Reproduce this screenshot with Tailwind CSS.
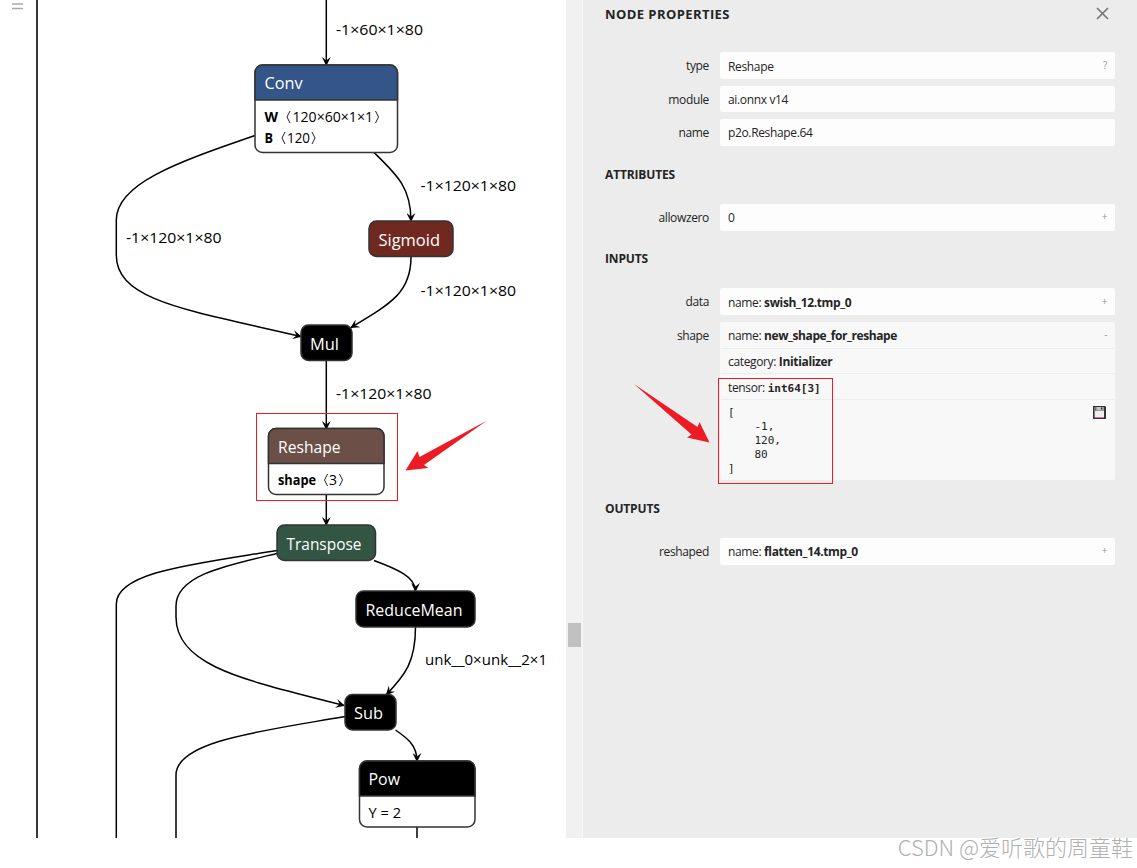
<!DOCTYPE html>
<html lang="en">

<head>
    <meta charset="UTF-8">
    <meta name="viewport" content="width=device-width, initial-scale=1.0">
    <title>Node Properties</title>
    <script src="https://cdn.jsdelivr.net/npm/@tailwindcss/browser@4"></script>
</head>

<body class="relative h-[868px] w-[1137px] overflow-hidden bg-white font-['Open_Sans','Noto_Sans',sans-serif]">
    <div class="flex h-[838px]">
        <!-- Graph -->
        <main class="w-[566px] shrink-0">
            <svg width="566" height="838" viewBox="0 0 566 838" class="block font-['Open_Sans','Noto_Sans',sans-serif]">
                <defs>
                    <marker id="arrow" viewBox="0 0 10 10" refX="9" refY="5" markerUnits="userSpaceOnUse" markerWidth="9" markerHeight="9" orient="auto">
                        <path d="M0 0 L10 5 L0 10 L4 5 Z" />
                    </marker>
                </defs>

                <!-- Menu button -->
                <path d="M12 4h11M12 8.5h11" stroke="#a8a8a8" stroke-width="1.4" />

                <!-- Edges -->
                <g fill="none" stroke="#000" stroke-width="1.5">
                    <path d="M37 0V838" stroke="#222" stroke-width="1.8" />
                    <path d="M326.300 0V65" marker-end="url(#arrow)" />
                    <path d="M255 135.500C175 163 116.300 184 116.300 220V255C116.300 301 188 310 301 336.500" marker-end="url(#arrow)" />
                    <path d="M374 152.500C396 174 411 187 411 221" marker-end="url(#arrow)" />
                    <path d="M411 257C411 292 392 303 351 327.500" marker-end="url(#arrow)" />
                    <path d="M326.300 361V429" marker-end="url(#arrow)" />
                    <path d="M326.300 495V525" marker-end="url(#arrow)" />
                    <path d="M277 550.500C194 564 116.300 572 116.300 604V838" />
                    <path d="M277 553.500C228 565 176 575 176 606V617C176 668 251 681 344 705.500" marker-end="url(#arrow)" />
                    <path d="M374 560.500C397 569 415.500 577 415.500 591" marker-end="url(#arrow)" />
                    <path d="M415.500 627C415.500 662 405 675 386.500 694.500" marker-end="url(#arrow)" />
                    <path d="M345 716.500C262 731 176 741 176 775V838" />
                    <path d="M395.500 730C407 738 417 745 417 761" marker-end="url(#arrow)" />
                    <path d="M417 827V838" />
                </g>

                <!-- Edge labels -->
                <g font-size="15" fill="#000">
                    <text x="336" y="35" textLength="87" lengthAdjust="spacingAndGlyphs">-1×60×1×80</text>
                    <text x="420.500" y="191" textLength="95.500" lengthAdjust="spacingAndGlyphs">-1×120×1×80</text>
                    <text x="126" y="243" textLength="95.500" lengthAdjust="spacingAndGlyphs">-1×120×1×80</text>
                    <text x="420.500" y="296" textLength="95.500" lengthAdjust="spacingAndGlyphs">-1×120×1×80</text>
                    <text x="336" y="399" textLength="95.500" lengthAdjust="spacingAndGlyphs">-1×120×1×80</text>
                    <text x="425" y="665" textLength="122" lengthAdjust="spacingAndGlyphs">unk__0×unk__2×1</text>
                </g>

                <!-- Nodes -->
                <g stroke="#333" stroke-width="1.500">
                    <rect x="255" y="65" width="142.500" height="87.500" rx="7.500" fill="#fff" />
                    <path d="M255 100V72.500a7.500 7.500 0 0 1 7.500-7.500H390a7.500 7.500 0 0 1 7.500 7.500V100Z" fill="#335588" />
                    <rect x="369" y="221" width="84" height="35.500" rx="7.500" fill="#702921" />
                    <rect x="301" y="325" width="51" height="35.500" rx="7.500" fill="#000" />
                    <rect x="268.500" y="428.500" width="115.500" height="66" rx="7.500" fill="#fff" />
                    <path d="M268.500 463.500V436a7.500 7.500 0 0 1 7.500-7.500H376.500a7.500 7.500 0 0 1 7.500 7.500V463.500Z" fill="#6c4f47" />
                    <rect x="277" y="525" width="98.500" height="35.500" rx="7.500" fill="#335544" />
                    <rect x="356" y="591" width="119" height="36" rx="7.500" fill="#000" />
                    <rect x="345" y="694.500" width="51" height="35.500" rx="7.500" fill="#000" />
                    <rect x="359.500" y="761" width="115.500" height="66" rx="7.500" fill="#fff" />
                    <path d="M359.500 796V768.500a7.500 7.500 0 0 1 7.500-7.500H467.500a7.500 7.500 0 0 1 7.500 7.500V796Z" fill="#000" />
                </g>
                <g font-size="16.500" fill="#fff">
                    <text x="264.500" y="89" textLength="38" lengthAdjust="spacingAndGlyphs">Conv</text>
                    <text x="378.500" y="246" textLength="61.500" lengthAdjust="spacingAndGlyphs">Sigmoid</text>
                    <text x="310" y="350" textLength="29" lengthAdjust="spacingAndGlyphs">Mul</text>
                    <text x="278" y="453" textLength="62.500" lengthAdjust="spacingAndGlyphs">Reshape</text>
                    <text x="286.500" y="550" textLength="75" lengthAdjust="spacingAndGlyphs">Transpose</text>
                    <text x="365.500" y="616" textLength="97" lengthAdjust="spacingAndGlyphs">ReduceMean</text>
                    <text x="354" y="719" textLength="29" lengthAdjust="spacingAndGlyphs">Sub</text>
                    <text x="368.500" y="785" textLength="31.500" lengthAdjust="spacingAndGlyphs">Pow</text>
                </g>
                <g font-size="14" fill="#000">
                    <text x="264.500" y="122" font-weight="700" textLength="13.500" lengthAdjust="spacingAndGlyphs">W</text>
                    <text x="292.500" y="122" textLength="80.500" lengthAdjust="spacingAndGlyphs">120×60×1×1</text>
                    <text x="264.500" y="143" font-weight="700" textLength="8.500" lengthAdjust="spacingAndGlyphs">B</text>
                    <text x="287" y="143" textLength="23" lengthAdjust="spacingAndGlyphs">120</text>
                    <text x="278" y="485" font-size="13.500" font-weight="700" textLength="38" lengthAdjust="spacingAndGlyphs">shape</text>
                    <text x="329" y="485" textLength="8" lengthAdjust="spacingAndGlyphs">3</text>
                    <text x="368.500" y="818" textLength="32.500" lengthAdjust="spacingAndGlyphs">Y = 2</text>
                </g>
                <!-- Angle brackets round the tensor shapes -->
                <path d="M290 111l-3 6 3 6M375.500 111l3 6-3 6M285 132l-3 6 3 6M312 132l3 6-3 6M327.500 474l-3 6 3 6M339.500 474l3 6-3 6" fill="none" stroke="#222" stroke-width="1" />

                <!-- Highlight -->
                <rect x="256.500" y="413.500" width="141" height="87" fill="none" stroke="#ed1c24" />
                <path d="M487 420.500L424 465 428.500 468 405.500 470.500 417.500 451 419.500 457Z" fill="#ed1c24" />
            </svg>
        </main>

        <!-- Scrollbar -->
        <div class="w-[17px] shrink-0 border-r border-[#f7f7f7] bg-[#f1f1f1] pt-[623px] pl-0.5">
            <div class="h-6 w-[13px] bg-[#c1c1c1]"></div>
        </div>

        <!-- Sidebar -->
        <aside class="relative flex-1 bg-[#ececec] pr-[22px] pl-[21px] text-xs tracking-[-0.35px] text-[#242424]">
            <header class="flex h-[52px] items-start justify-between pr-[6px]">
                <h1 class="pt-1 pl-px text-[13px] leading-5 font-bold tracking-[0.42px]">NODE PROPERTIES</h1>
                <svg width="13" height="13" viewBox="0 0 13 13" class="mt-[7px]" stroke="#777" stroke-width="1.7">
                    <path d="M1 1l11 11M12 1L1 12" />
                </svg>
            </header>

            <section class="h-[112px]">
                <div class="mb-[7px] flex h-[27px] gap-[11px]">
                    <div class="w-[105px] text-right leading-[28px]">type</div>
                    <div class="flex h-[27px] flex-1 justify-between rounded-xs bg-[#fdfdfd] px-2 leading-[29px]">
                        <span>Reshape</span><span class="text-[10px] leading-[26px] text-[#999]">?</span>
                    </div>
                </div>
                <div class="mb-[7px] flex h-[26px] gap-[11px]">
                    <div class="w-[105px] text-right leading-[27px]">module</div>
                    <div class="h-[26px] flex-1 rounded-xs bg-[#fdfdfd] px-2 leading-[28px]">ai.onnx v14</div>
                </div>
                <div class="flex gap-[11px]">
                    <div class="w-[105px] text-right leading-[27px]">name</div>
                    <div class="h-[27px] flex-1 rounded-xs bg-[#fdfdfd] px-2 leading-[28px]">p2o.Reshape.64</div>
                </div>
            </section>

            <h2 class="h-10 pl-px leading-[21px] font-bold tracking-[-0.15px]">ATTRIBUTES</h2>
            <section class="h-11">
                <div class="flex gap-[11px]">
                    <div class="w-[105px] text-right leading-[27px]">allowzero</div>
                    <div class="flex h-[27px] flex-1 justify-between rounded-xs bg-[#fdfdfd] px-2 leading-[28px]">
                        <span>0</span><span class="text-[10px] leading-[24px] text-[#999]">+</span>
                    </div>
                </div>
            </section>

            <h2 class="h-10 pl-px leading-[21px] font-bold tracking-[-0.15px]">INPUTS</h2>
            <section class="h-[210px]">
                <div class="mb-[7px] flex h-[27px] gap-[11px]">
                    <div class="w-[105px] text-right leading-[28px]">data</div>
                    <div class="flex h-[27px] flex-1 justify-between rounded-xs bg-[#fdfdfd] px-2 leading-[30px]">
                        <span>name: <b class="font-bold">swish_12.tmp_0</b></span><span class="text-[10px] leading-[26px] text-[#999]">+</span>
                    </div>
                </div>
                <div class="flex gap-[11px]">
                    <div class="w-[105px] text-right leading-[27px]">shape</div>
                    <div class="h-[158px] flex-1 rounded-xs bg-[#f8f8f8] px-px">
                        <div class="flex h-[27px] justify-between border-b border-[#ececec] px-[7px] leading-[28px]">
                            <span>name: <b class="font-bold tracking-[-0.42px]">new_shape_for_reshape</b></span><span class="text-[10px] leading-[24px] text-[#999]">-</span>
                        </div>
                        <div class="h-[25px] border-b border-[#ececec] px-[7px] leading-[26px]">category: <b class="font-bold">Initializer</b></div>
                        <div class="h-[26px] border-b border-[#ececec] px-[7px] leading-[27px]">tensor: <b class="font-['DejaVu_Sans_Mono',monospace] text-[11px] font-bold tracking-normal">int64[3]</b></div>
                        <div class="flex justify-between pt-[6px] pr-2 pl-[7px]">
                            <pre class="font-['DejaVu_Sans_Mono',monospace] text-[11px] leading-[14px] tracking-normal">[
    -1,
    120,
    80
]</pre>
                            <!-- Save tensor -->
                            <svg width="13" height="13" viewBox="0 0 13 13">
                                <path d="M0 0h12l1 1v12H0Z" fill="#333" />
                                <path d="M1 1h2v11H1ZM3 4h7l1 1v7H3Z" fill="#777" />
                                <path d="M3 1h8v4H3Z" fill="#999" />
                                <path d="M4 1h5v3H4Z" fill="#c4c4c4" />
                                <path d="M8 1.500h1v2H8Z" fill="#222" />
                                <path d="M2 5h9v6H2Z" fill="#f0edf0" />
                                <path d="M2 11h9v1H2Z" fill="#d070a0" />
                            </svg>
                        </div>
                    </div>
                </div>
            </section>

            <h2 class="h-10 pl-px leading-[21px] font-bold tracking-[-0.15px]">OUTPUTS</h2>
            <section>
                <div class="flex gap-[11px]">
                    <div class="w-[105px] text-right leading-[27px]">reshaped</div>
                    <div class="flex h-[27px] flex-1 justify-between rounded-xs bg-[#fdfdfd] px-2 leading-[28px]">
                        <span>name: <b class="font-bold">flatten_14.tmp_0</b></span><span class="text-[10px] leading-[24px] text-[#999]">+</span>
                    </div>
                </div>
            </section>

            <!-- Highlight over the tensor value -->
            <svg width="210" height="120" viewBox="630 370 210 120" class="absolute top-[370px] left-[47px]">
                <rect x="718.500" y="378.500" width="114" height="105" fill="none" stroke="#ed1c24" />
                <path d="M634 384L697.500 427 699.500 422 709.500 442.500 687 437.500 691.500 434.500Z" fill="#ed1c24" />
            </svg>
        </aside>
    </div>

    <div class="absolute top-[830px] right-[4px] font-['Noto_Sans_CJK_SC',sans-serif] text-[22px] leading-8 font-light whitespace-nowrap text-[#b0b0b0] [text-shadow:-1px_-1px_0_#fff]">CSDN @爱听歌的周童鞋</div>
</body>

</html>
